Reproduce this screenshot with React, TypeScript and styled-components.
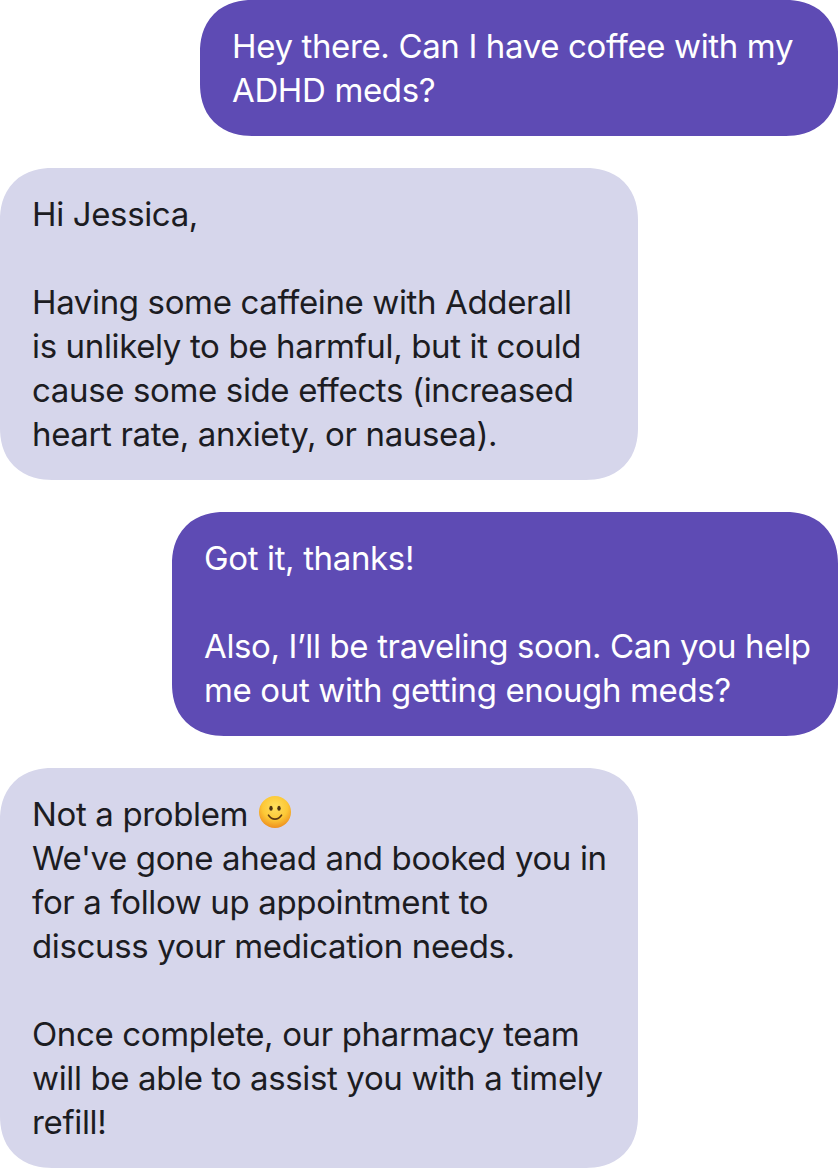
import React from "react";
import styled, { createGlobalStyle } from "styled-components";

const Global = createGlobalStyle`
  html, body { margin: 0; padding: 0; background: #fff; }
`;

const Thread = styled.div`
  width: 838px;
  height: 1168px;
  display: flex;
  flex-direction: column;
  gap: 32px;
  font-family: Inter, sans-serif;
  font-size: 33px;
  font-weight: 400;
  line-height: 44px;
  letter-spacing: -0.36px;
`;

const Bubble = styled.div<{ $sent?: boolean; $width: number }>`
  box-sizing: border-box;
  width: ${(p) => p.$width}px;
  padding: 24px 32px;
  border-radius: 52px;
  corner-shape: superellipse(1.15);
  align-self: ${(p) => (p.$sent ? "flex-end" : "flex-start")};
  background: ${(p) => (p.$sent ? "#5e4bb4" : "#d6d6eb")};
  color: ${(p) => (p.$sent ? "#ffffff" : "#1c1c22")};
  white-space: nowrap;
`;

const Emoji = styled.svg`
  width: 34px;
  height: 34px;
  vertical-align: -3px;
  margin-left: 1px;
`;

const Smile = () => (
  <Emoji viewBox="0 0 34 34">
    <defs>
      <radialGradient id="face" cx="50%" cy="35%" r="65%">
        <stop offset="0%" stopColor="#ffdf5e" />
        <stop offset="60%" stopColor="#fcc836" />
        <stop offset="100%" stopColor="#ee8f1e" />
      </radialGradient>
    </defs>
    <circle cx="17" cy="17" r="16" fill="url(#face)" />
    <ellipse cx="13" cy="13.3" rx="1.7" ry="2.5" fill="#4f3210" />
    <ellipse cx="21" cy="13.3" rx="1.7" ry="2.5" fill="#4f3210" />
    <path d="M10.5 20.2c2 2.9 4.2 3.9 6.5 3.9s4.5-1 6.5-3.9" fill="none" stroke="#5f3a12" strokeWidth="1.6" strokeLinecap="round" />
  </Emoji>
);

export default function App() {
  return (
    <>
      <Global />
      <Thread>
        <Bubble $sent $width={638}>
          Hey there. Can I have coffee with my<br />ADHD meds?
        </Bubble>
        <Bubble $width={638}>
          Hi Jessica,<br /><br />
          Having some caffeine with Adderall<br />
          is unlikely to be harmful, but it could<br />
          cause some side effects (increased<br />
          heart rate, anxiety, or nausea).
        </Bubble>
        <Bubble $sent $width={666}>
          Got it, thanks!<br /><br />
          Also, I’ll be traveling soon. Can you help<br />
          me out with getting enough meds?
        </Bubble>
        <Bubble $width={638}>
          Not a problem <Smile /><br />
          We've gone ahead and booked you in<br />
          for a follow up appointment to<br />
          discuss your medication needs.<br /><br />
          Once complete, our pharmacy team<br />
          will be able to assist you with a timely<br />
          refill!
        </Bubble>
      </Thread>
    </>
  );
}
